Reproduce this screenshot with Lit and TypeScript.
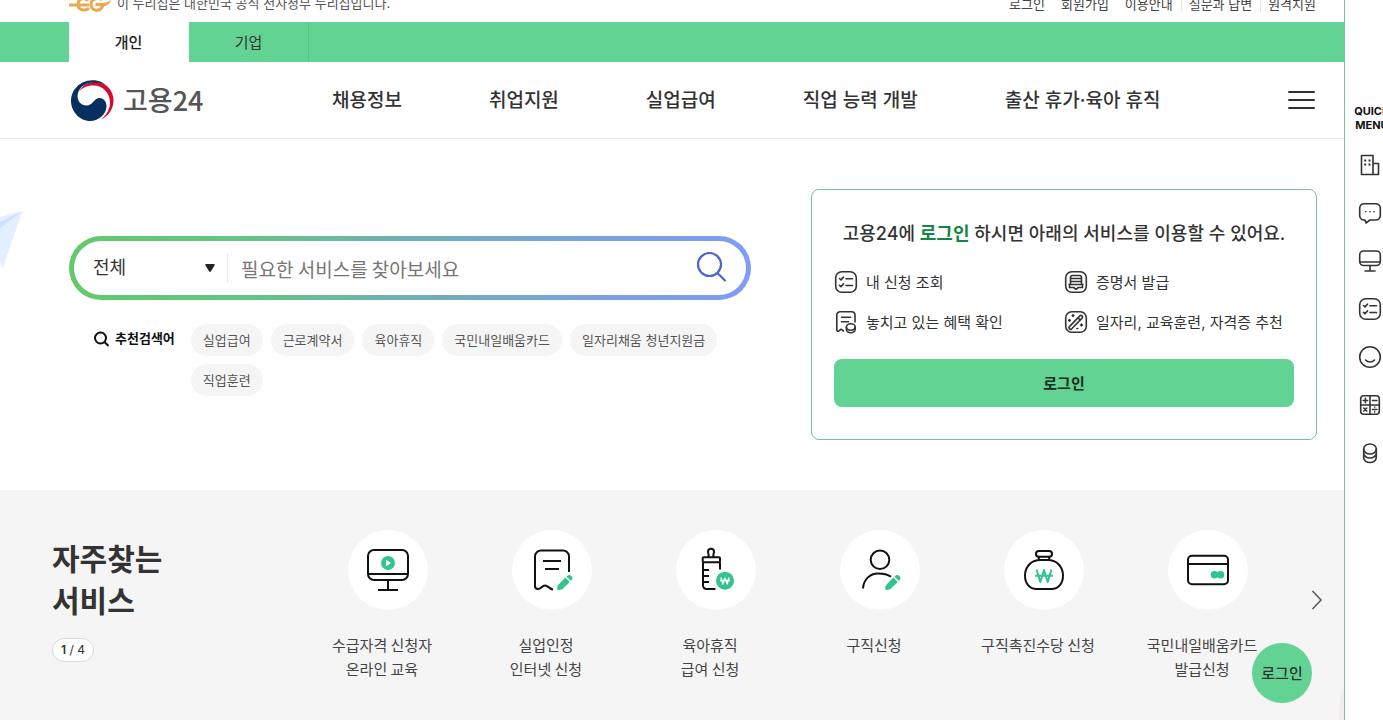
import { LitElement, html, css, svg } from "lit";
import { customElement } from "lit/decorators.js";

const checklist = svg`<rect x="1.7" y="1.7" width="20.6" height="20.6" rx="6"/><path d="M5.5 8.5l1.5 1.4 2.5-2.8M5.5 15.3l1.5 1.4 2.5-2.8M12 8.7h6.5M12 15.5h6.5"/>`;

const benefits = [
  { label: "내 신청 조회", icon: checklist },
  {
    label: "증명서 발급",
    icon: svg`<rect x="1.7" y="1.7" width="20.6" height="20.6" rx="6"/><path d="M6.5 14V7.5a2 2 0 0 1 2-2h7a2 2 0 0 1 2 2V14M6.5 8.5h11M6.5 11.500h11M5 14.500h14M5.500 14.500v3h4.200l2.300 1.800 2.300-1.800h4.200v-3"/>`,
  },
  {
    label: "놓치고 있는 혜택 확인",
    icon: svg`<path d="M9.5 21l-2.5-1.8-2 1.600c-1 .8-2.200.4-2.200-.9V5a3.300 3.300 0 0 1 3.300-3.300h11.600A3.300 3.300 0 0 1 21 5v7M7.500 7.300h9M7.500 11.800h7"/><ellipse cx="16.800" cy="17" rx="4.400" ry="3.200"/><path d="M12.400 17v2.600c0 1.800 2 3.200 4.400 3.200s4.400-1.400 4.400-3.200V17"/>`,
  },
  {
    label: "일자리, 교육훈련, 자격증 추천",
    icon: svg`<rect x="1.7" y="1.7" width="20.6" height="20.6" rx="6"/><path d="M5.4 16.600L15.800 5.900c1.600-1.500 3.800.5 2.300 2.200L7.700 18.800c-1.600 1.500-3.800-.5-2.300-2.200zM14 7.800l2.200 2.300"/><path d="M9 4.800v1.600M8.200 5.600h1.600M5.500 9.600v1.600M4.700 10.400h1.600M17.500 14v2M16.500 15h2M12.800 18.500h1"/>`,
  },
];

const pencil = svg`<path class="fill" d="M29.300 43.800c-.4-2 0-4 1.500-5.500l6.500-6.700 4.500 4.500-6.800 6.400c-1.500 1.500-3.500 1.600-5.700 1.300zM38.500 30.400l.8-.7c3-2.300 6.800 1.500 4.400 4.400l-.8.8z"/>`;

const services = [
  {
    lines: ["수급자격 신청자", "온라인 교육"],
    icon: svg`<rect x="4" y="4" width="40" height="30" rx="6"/><path d="M4 28h40M24 34v10M14 44h20"/><circle class="fill" cx="24" cy="17" r="7"/><path d="M22 13.800v6.400l5-3.200z" fill="#fff" stroke="none"/>`,
  },
  {
    lines: ["실업인정", "인터넷 신청"],
    icon: svg`<path d="M25 43.500c-3.300-.3-5-4-8-4s-4 3.500-7 3.500c-2 0-3-1.200-3-3V10.500a6 6 0 0 1 6-6h22a6 6 0 0 1 6 6V26M15 15h18M17 23h14"/>${pencil}`,
  },
  {
    lines: ["육아휴직", "급여 신청"],
    icon: svg`<path d="M16 11c1.800-2.200 0-3.200 0-5.200a3 3 0 0 1 6 0c0 2-1.800 3-.0 5.200"/><rect x="10.700" y="11.300" width="17.300" height="5" rx="1"/><path d="M11 16.500V39.500a3.500 3.500 0 0 0 3.500 3.500H23.500M28 16.500V23.500M11 24h6M11 30h6M11 36h6"/><circle class="fill" cx="33" cy="34.700" r="9"/><path class="white" d="M29 31.500l1.800 6.500L33 32l2.200 6 1.800-6.500M28 34.500h10"/>`,
  },
  {
    lines: ["구직신청"],
    icon: svg`<circle cx="24" cy="13.800" r="9.300"/><path d="M7 42.500C7.500 33.500 14 27.500 22 27.500c5 0 9 .4 13 3.200"/>${pencil}`,
  },
  {
    lines: ["구직촉진수당 신청"],
    icon: svg`<rect x="16" y="5" width="16" height="5.700" rx="2.800"/><path d="M18.800 10.700v3M29.200 10.700v3M19 14h10C37 14.500 43 21 43 29.500 43 38 38 43 31.500 43h-15C10 43 5 38 5 29.500 5 21 11 14.500 19 14z"/><path class="green" d="M16.500 23.500L20.300 36 24 24l3.700 12 3.800-12.500M15 29.800h18"/>`,
  },
  {
    lines: ["국민내일배움카드", "발급신청"],
    icon: svg`<rect x="4" y="9.700" width="40" height="28.500" rx="4"/><path d="M4 18h40"/><circle class="fill" cx="30.500" cy="28.700" r="3.800"/><circle class="fill" cx="36.500" cy="28.700" r="3.800"/>`,
  },
];

const quick = [
  { label: "기업 찾기", icon: svg`<path d="M3.500 2.500h11.500v19H3.500zM15 10.500h5.500v11H15z"/><path d="M6.200 6.500h2v2h-2zM10.500 6.500h2v2h-2zM6.200 10.500h2v2h-2zM10.500 10.500h2v2h-2z" fill="#333" stroke="none"/>` },
  { label: "상담", icon: svg`<path d="M7 19H6a4.500 4.500 0 0 1-4.300-4.500V7A4.500 4.500 0 0 1 6.200 2.700h11.600A4.500 4.500 0 0 1 22.300 7v7.500A4.500 4.500 0 0 1 17.800 19H12l-4 3z"/><path d="M7.800 10.800h.1M11.900 10.800h.1M16 10.800h.1"/>` },
  { label: "온라인 교육", icon: svg`<rect x="1.700" y="2" width="20.600" height="14.500" rx="4"/><path d="M2 13h20M12 16.500v5.500M7 22h10"/>` },
  { label: "신청 내역", icon: checklist },
  { label: "만족도", icon: svg`<circle cx="12" cy="12" r="10.300"/><path d="M7.500 15c2.500 2.700 6.500 2.700 9 0"/>` },
  { label: "모의계산", icon: svg`<rect x="2.700" y="2.700" width="18.600" height="18.600" rx="3"/><path d="M12 2.700v18.600M2.700 12h18.600M5.200 7.500h4.400M7.400 5.300v4.400M14.500 7.500h4.400M5.800 15l3 3M8.800 15l-3 3M14.500 16.500h4.400M16.700 14v.1M16.700 18.900v.1"/>` },
  { label: "수당", icon: svg`<ellipse cx="12" cy="8" rx="6.300" ry="5"/><path d="M5.700 8v4c0 2.800 2.800 5 6.300 5s6.300-2.200 6.300-5V8M5.700 12v4.500c0 2.800 2.800 5 6.300 5s6.300-2.200 6.300-5V12"/>` },
];

@customElement("app-root")
export class AppRoot extends LitElement {
  static styles = css`
    :host {
      display: block;
      font-family: Inter, "Noto Sans CJK KR", sans-serif;
      line-height: 1.5;
      color: #333;
      background: #fff;
    }
    * { box-sizing: border-box; }
    a { color: inherit; text-decoration: none; }
    h1, h2, p, ul { margin: 0; padding: 0; }
    ul { list-style: none; }
    button, input, select { font: inherit; color: inherit; border: 0; background: none; padding: 0; margin: 0; }
    button { cursor: pointer; }
    svg { display: block; flex: none; }
    .line { fill: none; stroke: #333; stroke-width: 1.6; stroke-linecap: round; stroke-linejoin: round; }

    .page { display: flex; height: 100vh; overflow: hidden; }
    .main { flex: 1; min-width: 0; display: flex; flex-direction: column; position: relative; }

    .gov { display: flex; align-items: center; height: 36px; margin-top: -14px; padding: 0 28px 0 69px; font-size: 13px; flex: none; color: #555; }
    .gov-mark { margin-right: 6px; }
    .utils { display: flex; margin-left: auto; color: #444; }
    .utils li { padding-left: 16px; line-height: 16px; }
    .utils .ruled { margin-left: 8px; padding-left: 7px; border-left: 1px solid #e5e5e5; }

    .tabs { display: flex; flex: none; height: 40px; padding-left: 69px; background: #63d393; font-size: 15px; }
    .tab { width: 120px; display: grid; place-items: center; padding-top: 2px; border-right: 1px solid #57c587; }
    .tab.on { background: #fff; border-color: #fff; font-weight: 500; color: #222; }

    .head { display: flex; align-items: center; flex: none; height: 77px; padding: 0 27px 0 69px; border-bottom: 1px solid #ebebeb; }
    .brand { display: flex; align-items: center; gap: 8px; width: 263px; font-family: "Noto Sans CJK KR", sans-serif; font-size: 27px; font-weight: 500; color: #555; line-height: 40px; }
    .nav { display: flex; gap: 87px; padding-top: 2px; font-size: 19px; font-weight: 500; white-space: nowrap; }
    .burger { margin-left: auto; }

    .hero { position: relative; display: grid; grid-template-columns: 682fr 506fr; gap: 60px; align-items: start; flex: none; padding: 50px 27px 50px 69px; }
    .plane { position: absolute; left: 0; top: 72px; }
    .find { padding-top: 47px; }
    .search { display: flex; align-items: center; height: 64px; padding: 0 19px; border: 5px solid transparent; border-radius: 32px; background: linear-gradient(#fff, #fff) padding-box, linear-gradient(90deg, #63c96b, #64c581 25%, #72abc0 55%, #7f9cf8) border-box; }
    .scope { display: grid; align-items: center; width: 135px; height: 30px; padding-right: 12px; border-right: 1px solid #e8e8e8; }
    .scope select, .scope svg { grid-area: 1 / 1; }
    .scope select { appearance: none; width: 100%; font-size: 18px; line-height: 28px; }
    .scope svg { justify-self: end; pointer-events: none; }
    .term { flex: 1; min-width: 0; margin-left: 13px; padding-top: 2px; font-family: "Noto Sans CJK KR", sans-serif; font-size: 19px; line-height: 28px; outline: 0; }
    .term::placeholder { color: #767676; opacity: 1; }
    .words { display: flex; gap: 16px; margin-top: 24px; padding-left: 25px; }
    .words h2 { display: flex; align-items: center; gap: 5px; flex: none; height: 30px; font-size: 13px; font-weight: 700; color: #111; }
    .chips { display: flex; flex-wrap: wrap; gap: 8px; font-size: 13px; color: #555; }
    .chip { display: block; padding: 0 12px; line-height: 32px; border-radius: 16px; background: #f5f5f5; }

    .card { padding: 22px 22px 32px; border: 1px solid #73c69a; border-radius: 8px; }
    .card h1 { font-size: 18px; line-height: 44px; font-weight: 500; text-align: center; white-space: nowrap; }
    .card strong { color: #14854a; font-weight: 700; }
    .benefits { display: grid; grid-template-columns: 1fr 1fr; margin-top: 6px; font-size: 15px; }
    .benefits li { display: flex; align-items: center; gap: 8px; height: 40px; white-space: nowrap; }
    .benefits span { padding-top: 3px; }
    .signin { width: 100%; height: 48px; margin-top: 17px; padding-top: 2px; border-radius: 8px; background: #63d393; font-size: 15px; font-weight: 700; color: #1b2b22; }

    .often { display: flex; flex: 1; padding-top: 40px; background: #f5f5f5; }
    .intro { width: 300px; flex: none; padding: 8px 0 0 52px; }
    .intro h2 { font-size: 30px; line-height: 42px; font-weight: 700; }
    .count { display: inline-grid; place-items: center; width: 42px; height: 24px; margin-top: 16px; border: 1px solid #d8d8d8; border-radius: 12px; background: #fff; font-size: 12px; }
    .count b { font-weight: 600; }
    .services { flex: 1; display: grid; grid-template-columns: repeat(6, 1fr); align-items: start; font-family: "Noto Sans CJK KR", sans-serif; font-size: 15px; line-height: 24px; text-align: center; color: #444; }
    .service { display: flex; flex-direction: column; align-items: center; gap: 23px; white-space: nowrap; }
    .disc { display: grid; place-items: center; width: 80px; height: 80px; margin-left: 11px; border-radius: 50%; background: #fff; }
    .disc .line { stroke: #111; stroke-width: 2; stroke-linecap: butt; }
    .fill { fill: #33c48d; stroke: none; }
    .disc .green { stroke: #33c48d; }
    .disc .white { stroke: #fff; stroke-width: 1.3; }
    .next { display: grid; place-items: center; width: 60px; height: 140px; flex: none; padding-left: 6px; }

    .aside { width: 39px; flex: none; border-left: 1px solid #73c69a; overflow: hidden; padding-top: 104px; }
    .quick { width: 50px; display: flex; flex-direction: column; align-items: center; text-align: center; }
    .quick h2 { padding-left: 4px; font-size: 11px; line-height: 14px; font-weight: 700; color: #111; }
    .quick ul { display: grid; gap: 24px; margin-top: 21px; }
    .float { position: absolute; right: 32px; bottom: 17px; width: 60px; height: 60px; padding-top: 2px; border-radius: 50%; background: #63d393; font-size: 15px; font-weight: 500; }
    .peek { position: absolute; right: 0; bottom: 0; width: 5px; height: 32px; border-top-left-radius: 5px 32px; background: #f1eded; }
  `;

  render() {
    return html`
      <div class="page">
        <main class="main">
          <div class="gov">
            <svg class="gov-mark" width="42" height="20" viewBox="0 0 42 20" fill="none" stroke="#e8a951" stroke-width="3">
              <path d="M0 11h20M18.500 7c-2-4-9.500-3-9.500 3.500 0 6 7.500 7 11 3.500M33 6c-3-3-11-2-11 4.500s9 8 11.500 2v-2h-7"/>
              <path d="M30 9c5 .5 9-.5 12.500-3.500C41 10 37 13 30 12.500z" fill="#e8a951" stroke="none"/>
            </svg>
            <p>이 누리집은 대한민국 공식 전자정부 누리집입니다.</p>
            <ul class="utils">
              <li><a href="#">로그인</a></li>
              <li><a href="#">회원가입</a></li>
              <li><a href="#">이용안내</a></li>
              <li class="ruled"><a href="#">질문과 답변</a></li>
              <li class="ruled"><a href="#">원격지원</a></li>
            </ul>
          </div>
          <nav class="tabs" aria-label="회원 유형">
            <a class="tab on" href="#">개인</a>
            <a class="tab" href="#">기업</a>
          </nav>
          <header class="head">
            <a class="brand" href="#">
              <svg width="46" height="44" viewBox="0 0 46 44">
                <path d="M10 14C14 5 22 3.500 28 4c10 1 16.500 9 16.500 18.500C44.500 31 39.500 38 32 41.500 38 36 41 31 41 24.500 41 15 34 7.500 24 7.500c-6 0-11.500 2.500-14 6.500z" fill="#d9082f"/>
                <path d="M37 7A21.300 20.600 0 0 0 2 22.500C2 34 11 43 21 43c9 0 16.500-7 16.500-15 0-5-3.500-8.200-7.500-8-5 .3-6 7.500-12.500 7.500-5.500 0-9-4.500-9-9.500C9 10 16 4.800 24 4.500c5-.2 9 .5 13 2.500z" fill="#06305f"/>
              </svg>
              <span>고용24</span>
            </a>
            <nav class="nav" aria-label="주 메뉴">
              ${["채용정보", "취업지원", "실업급여", "직업 능력 개발", "출산 휴가·육아 휴직"].map((t) => html`<a href="#">${t}</a>`)}
            </nav>
            <button class="burger" aria-label="전체 메뉴">
              <svg width="32" height="24" viewBox="0 0 32 24" stroke="#333" stroke-width="2" stroke-linecap="round"><path d="M4 4h25M4 12h25M4 20h25"/></svg>
            </button>
          </header>

          <section class="hero">
            <svg class="plane" width="23" height="58" viewBox="0 0 23 58">
              <path d="M0 6L22.500 0 2.500 57.500 0 49z" fill="#e3eefe"/>
              <path d="M0 11L22.500 0 0 17z" fill="#cfe0f8"/>
            </svg>
            <div class="find">
              <form class="search" role="search">
                <div class="scope">
                  <select aria-label="검색 범위"><option>전체</option></select>
                  <svg width="10" height="8" viewBox="0 0 10 8"><path d="M1.500 0h7Q10.500 0 9.500 1.600L6 7.200Q5 8.600 4 7.200L.5 1.600Q-.5 0 1.500 0z" fill="#222"/></svg>
                </div>
                <input class="term" type="text" aria-label="검색어" placeholder="필요한 서비스를 찾아보세요">
                <button type="button" aria-label="검색">
                  <svg width="32" height="32" viewBox="0 0 32 32" fill="none" stroke="#4d66cf" stroke-width="2.200" stroke-linecap="round"><circle cx="14.500" cy="12.500" r="11.500"/><path d="M22.500 21l7.500 7.500"/></svg>
                </button>
              </form>
              <div class="words">
                <h2>
                  <svg width="16" height="16" viewBox="0 0 16 16" fill="none" stroke="#111" stroke-width="2"><circle cx="6.500" cy="7" r="5.500"/><path d="M10.500 11l4 4"/></svg>
                  추천검색어
                </h2>
                <ul class="chips">
                  ${["실업급여", "근로계약서", "육아휴직", "국민내일배움카드", "일자리채움 청년지원금", "직업훈련"].map((t) => html`<li><a class="chip" href="#">${t}</a></li>`)}
                </ul>
              </div>
            </div>
            <div class="card">
              <h1>고용24에 <strong>로그인</strong> 하시면 아래의 서비스를 이용할 수 있어요.</h1>
              <ul class="benefits">
                ${benefits.map((b) => html`<li><svg class="line" width="24" height="24" viewBox="0 0 24 24">${b.icon}</svg><span>${b.label}</span></li>`)}
              </ul>
              <button class="signin">로그인</button>
            </div>
          </section>

          <section class="often">
            <div class="intro">
              <h2>자주찾는<br>서비스</h2>
              <p class="count"><span><b>1</b> / 4</span></p>
            </div>
            <ul class="services">
              ${services.map((s) => html`
                <li><a class="service" href="#">
                  <span class="disc"><svg class="line" width="48" height="48" viewBox="0 0 48 48">${s.icon}</svg></span>
                  <span>${s.lines.map((l, i) => (i ? html`<br>${l}` : l))}</span>
                </a></li>`)}
            </ul>
            <button class="next" aria-label="다음">
              <svg width="12" height="20" viewBox="0 0 12 20" fill="none" stroke="#555" stroke-width="1.500"><path d="M1.500 1l8.500 9-8.500 9"/></svg>
            </button>
          </section>
          <div class="peek"></div>
          <button class="float">로그인</button>
        </main>
        <aside class="aside">
          <div class="quick">
            <h2>QUICK<br>MENU</h2>
            <ul>
              ${quick.map((q) => html`<li><a href="#" aria-label=${q.label}><svg class="line" width="24" height="24" viewBox="0 0 24 24">${q.icon}</svg></a></li>`)}
            </ul>
          </div>
        </aside>
      </div>
    `;
  }
}
